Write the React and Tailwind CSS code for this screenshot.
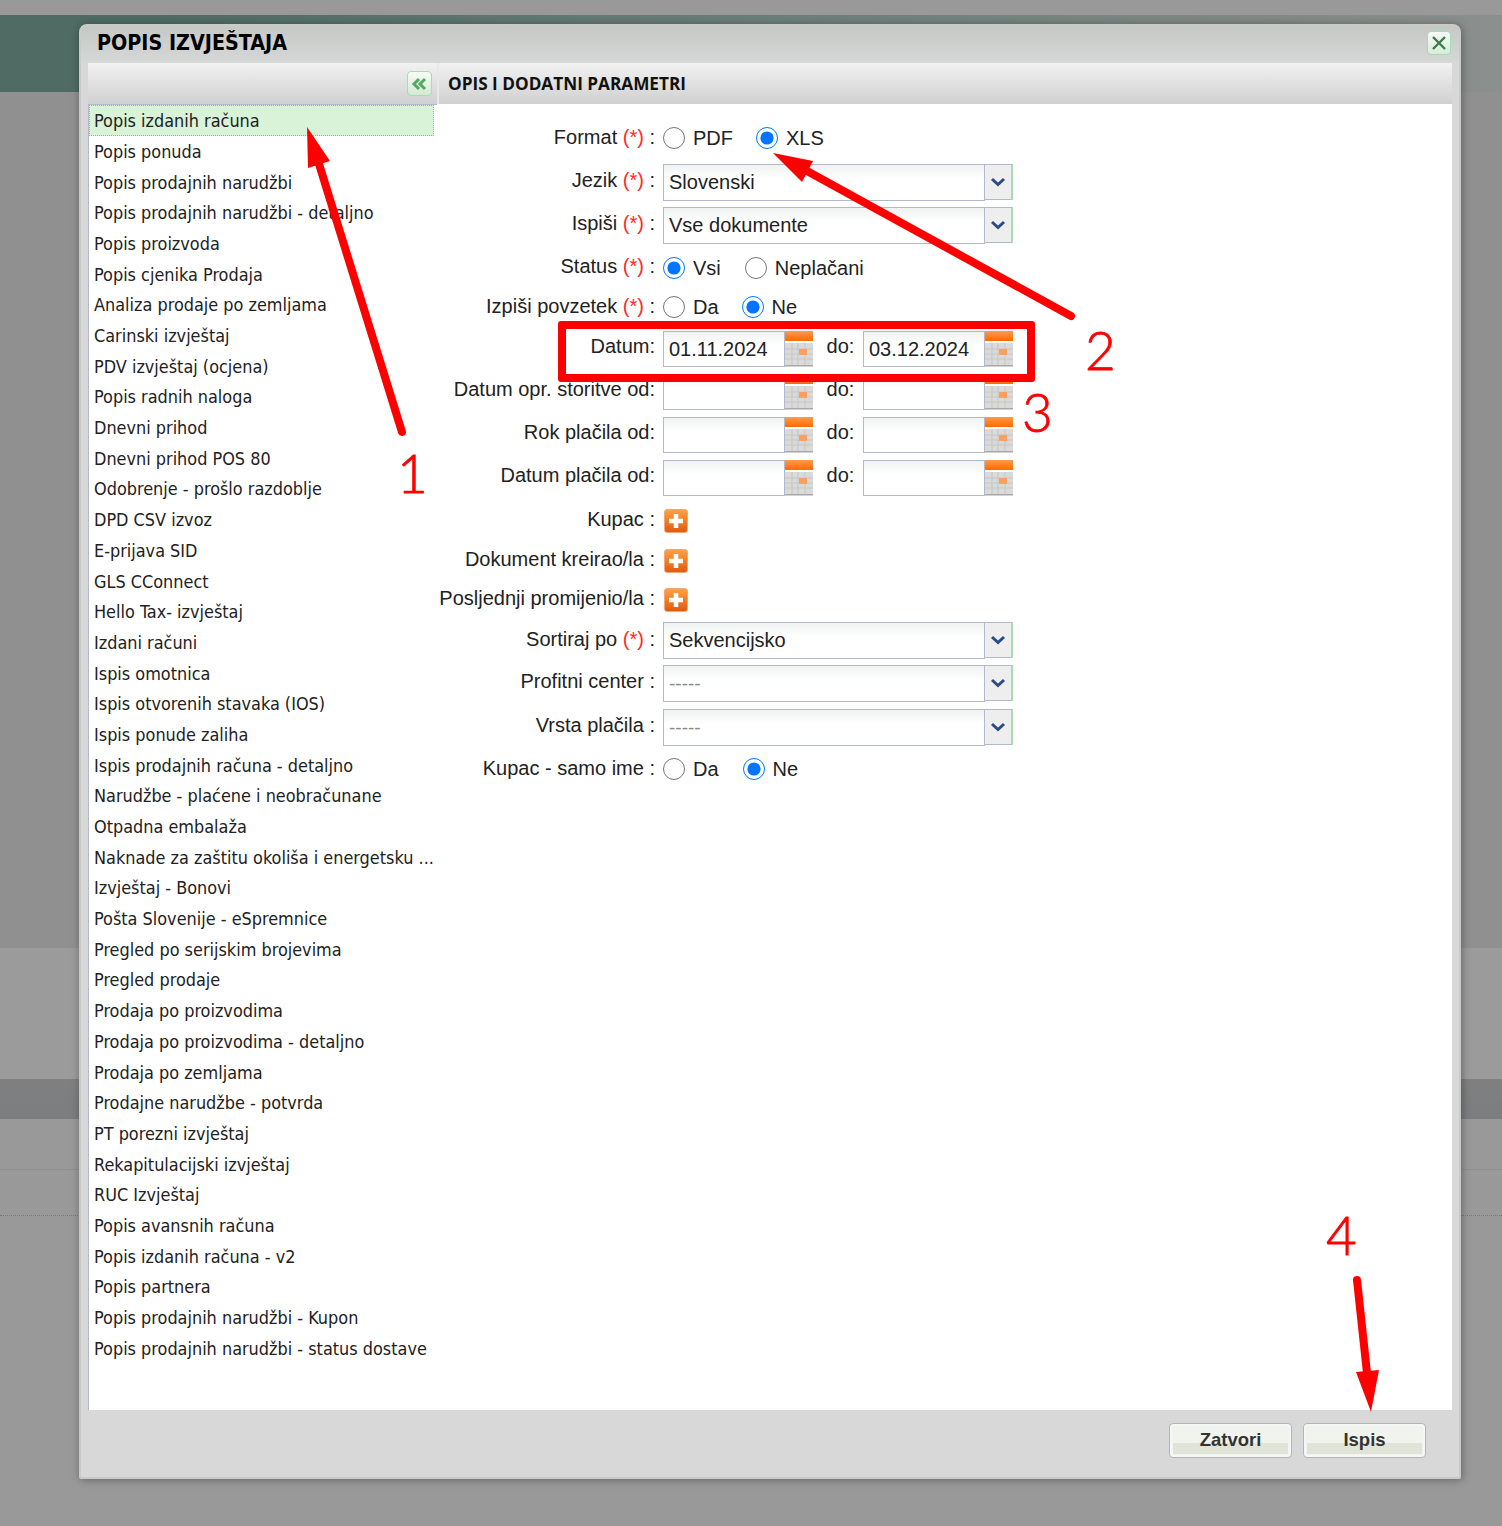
import React from "react";

const reports = [
  "Popis izdanih računa",
  "Popis ponuda",
  "Popis prodajnih narudžbi",
  "Popis prodajnih narudžbi - detaljno",
  "Popis proizvoda",
  "Popis cjenika Prodaja",
  "Analiza prodaje po zemljama",
  "Carinski izvještaj",
  "PDV izvještaj (ocjena)",
  "Popis radnih naloga",
  "Dnevni prihod",
  "Dnevni prihod POS 80",
  "Odobrenje - prošlo razdoblje",
  "DPD CSV izvoz",
  "E-prijava SID",
  "GLS CConnect",
  "Hello Tax- izvještaj",
  "Izdani računi",
  "Ispis omotnica",
  "Ispis otvorenih stavaka (IOS)",
  "Ispis ponude zaliha",
  "Ispis prodajnih računa - detaljno",
  "Narudžbe - plaćene i neobračunane",
  "Otpadna embalaža",
  "Naknade za zaštitu okoliša i energetsku ...",
  "Izvještaj - Bonovi",
  "Pošta Slovenije - eSpremnice",
  "Pregled po serijskim brojevima",
  "Pregled prodaje",
  "Prodaja po proizvodima",
  "Prodaja po proizvodima - detaljno",
  "Prodaja po zemljama",
  "Prodajne narudžbe - potvrda",
  "PT porezni izvještaj",
  "Rekapitulacijski izvještaj",
  "RUC Izvještaj",
  "Popis avansnih računa",
  "Popis izdanih računa - v2",
  "Popis partnera",
  "Popis prodajnih narudžbi - Kupon",
  "Popis prodajnih narudžbi - status dostave",
];

function Label({ text, required, colon = " :", className = "pb-[4px]" }) {
  return (
    <div className={"w-[226px] shrink-0 pr-[8px] text-right whitespace-nowrap " + className}>
      {text}
      {required && <span className="text-[#ff2a2a]"> (*)</span>}
      {colon}
    </div>
  );
}

function Radio({ label, checked, className }) {
  return (
    <label className={"flex items-center " + className}>
      <input type="radio" readOnly checked={!!checked} className="m-0 h-[22px] w-[22px]" />
      <span className="ml-[8px]">{label}</span>
    </label>
  );
}

function Select({ value, placeholder }) {
  return (
    <div className="flex h-[37px] w-[350px]">
      <div className="flex h-[37px] w-[322px] items-center border border-[#b4b8cd] bg-gradient-to-b from-[#f0f2f2] to-white to-40% pl-[5px]">
        {placeholder ? <span className="pt-[2px] text-[19px] text-[#8a8a8a]">-----</span> : value}
      </div>
      <div className="flex h-[36px] w-[28px] items-center justify-center border-t border-r-2 border-t-[#b4b8cd] border-r-[#a5dcb4] bg-[#eeeeee] shadow-[inset_0_-1px_0_#b4b8cd]">
        <svg width="16" height="10" viewBox="0 0 16 10">
          <path d="M2 2 L8 7.5 L14 2" fill="none" stroke="#2c4a85" strokeWidth="3" />
        </svg>
      </div>
    </div>
  );
}

function Calendar() {
  return (
    <svg width="28" height="36" viewBox="0 0 28 36" className="shrink-0">
      <defs>
        <linearGradient id="calTop" x1="0" y1="0" x2="0" y2="1">
          <stop offset="0" stopColor="#ff9a4d" />
          <stop offset="1" stopColor="#ff6a00" />
        </linearGradient>
      </defs>
      <rect x="0" y="0" width="28" height="10" fill="url(#calTop)" />
      <rect x="0" y="12" width="28" height="22" fill="#dadada" />
      <path
        d="M0 18h28M0 23h28M0 28h28M7 12v22M13 12v22M20 12v22"
        stroke="#c6c6c4"
        strokeWidth="1"
      />
      <rect x="14" y="18" width="8" height="6" fill="#ff9f5f" />
      <rect x="0" y="34" width="28" height="1.5" fill="#a8a8a8" />
    </svg>
  );
}

function DateInput({ value }) {
  return (
    <div className="flex">
      <div className="flex h-[36px] w-[122px] items-center border border-[#b4b8cd] bg-gradient-to-b from-[#f0f2f2] to-white to-40% pl-[5px]">
        {value}
      </div>
      <Calendar />
    </div>
  );
}

function DateRow({ label, from, to, className }) {
  return (
    <div className={"flex h-[36px] items-center " + className}>
      <Label text={label} colon=":" className="pb-[6px]" />
      <DateInput value={from} />
      <div className="w-[50px] pb-[7px] pl-[5px] text-center">do:</div>
      <DateInput value={to} />
    </div>
  );
}

function Plus() {
  return (
    <div className="ml-[1px] flex h-[24px] w-[24px] items-center justify-center rounded-[3px] border border-[#f0a878] bg-gradient-to-b from-[#ffa040] to-[#e25a0a]">
      <svg width="16" height="16" viewBox="0 0 16 16">
        <path d="M8 1v14M1 8h14" stroke="#ffffff" strokeWidth="4.5" />
      </svg>
    </div>
  );
}

function Row({ className, children }) {
  return <div className={"flex h-[36px] items-center " + className}>{children}</div>;
}

function Btn({ text }) {
  return (
    <button className="relative h-[35px] w-[123px] overflow-hidden rounded-[4px] border border-[#b5b5b5] bg-[#f1f3ee] pb-[2px] shadow-[inset_0_0_0_2px_#f6f6f6] font-['Liberation_Sans',sans-serif] text-[18.5px] font-bold text-[#333]">
      <div className="absolute inset-x-[3px] bottom-[3px] h-[11px] bg-[#dfe4d6]" />
      <span className="relative">{text}</span>
    </button>
  );
}

export default function App() {
  return (
    <div className="relative h-[1526px] w-[1502px] overflow-hidden bg-[#999999] font-['Liberation_Sans',sans-serif]">
      {/* zatamnjena pozadina */}
      <div className="h-[15px] bg-[#999999]" />
      <div className="h-[77px] bg-gradient-to-r from-[#4f6b63] from-10% via-[#6b7f7a] to-[#8b8f8d]" />
      <div className="h-[856px] bg-[#909090]" />
      <div className="h-[131px] bg-[#9b9b9b]" />
      <div className="h-[40px] bg-gradient-to-b from-[#808080] to-[#7b7d7e]" />
      <div className="h-[51px] border-b border-[#909090] bg-[#999999]" />
      <div className="h-[46px] border-b border-dotted border-[#777] bg-[#999999]" />

      {/* prozor */}
      <div className="absolute left-[79px] top-[24px] flex h-[1455px] w-[1382px] flex-col rounded-t-[8px] rounded-b-[2px] border-2 border-[#c9cbc9] bg-[#d8d8d8] shadow-[1px_1px_8px_rgba(0,0,0,0.35)]">
        <div className="flex h-[37px] shrink-0 items-center justify-between bg-gradient-to-b from-[#c6c8c6] to-[#d6d8d7] pb-[4px] pl-[16px] pr-[8px]">
          <div className="font-['DejaVu_Sans_Condensed','DejaVu_Sans',sans-serif] text-[21.3px] font-bold text-black">POPIS IZVJEŠTAJA</div>
          <div className="flex h-[24px] w-[24px] items-center justify-center rounded-[4px] border border-[#a5dcb0] bg-gradient-to-b from-[#f6fbf6] to-[#d8ecd8]">
            <svg width="18" height="18" viewBox="0 0 18 18">
              <path d="M3 3 L15 15 M15 3 L3 15" stroke="#3f7a4c" strokeWidth="2.4" />
            </svg>
          </div>
        </div>

        <div className="ml-[7px] mr-[7px] flex h-[1347px] shrink-0">
          <div className="flex w-[349px] shrink-0 flex-col">
            <div className="flex h-[41px] shrink-0 items-center justify-end bg-gradient-to-b from-[#f2f2f2] to-[#d0d0d0] pr-[5px]">
              <div className="flex h-[25px] w-[25px] items-center justify-center rounded-[4px] border border-[#a5dcb0] bg-gradient-to-b from-[#f6fbf6] to-[#d4ead4]">
                <svg width="17" height="14" viewBox="0 0 17 14">
                  <path d="M8 2 L3 7 L8 12 M14 2 L9 7 L14 12" fill="none" stroke="#55a85f" strokeWidth="3" />
                </svg>
              </div>
            </div>
            <div className="flex-1 border-l border-t border-[#b4b8cd] bg-white font-['DejaVu_Sans_Condensed','DejaVu_Sans',sans-serif] text-[17.9px] text-[#222]">
              {reports.map((r, i) => (
                <div
                  key={r}
                  className={
                    i === 0
                      ? "flex h-[31px] w-[345px] items-center whitespace-nowrap border border-dotted border-[#9ab09a] bg-[#d9f3d9] pl-[4px] pt-[2px]"
                      : "flex h-[30.7px] items-center whitespace-nowrap pl-[5px] pt-[2px]"
                  }
                >
                  {r}
                </div>
              ))}
            </div>
          </div>

          <div className="flex flex-1 flex-col">
            <div className="flex h-[41px] shrink-0 items-center border-l-2 border-[#e8e8e8] bg-gradient-to-b from-[#f2f2f2] to-[#d0d0d0] pl-[9px] font-['Open_Sans',sans-serif] text-[17.2px] font-bold text-[#111]">
              OPIS I DODATNI PARAMETRI
            </div>
            <div className="flex-1 bg-white pt-[16px] text-[20px] text-[#222]">
              <Row>
                <Label text="Format" required className="pb-[3px]" />
                <Radio label="PDF" />
                <Radio label="XLS" checked className="ml-[23px]" />
              </Row>
              <Row className="mt-[8px]">
                <Label text="Jezik" required />
                <Select value="Slovenski" />
              </Row>
              <Row className="mt-[7px]">
                <Label text="Ispiši" required />
                <Select value="Vse dokumente" />
              </Row>
              <Row className="mt-[7px]">
                <Label text="Status" required />
                <Radio label="Vsi" checked />
                <Radio label="Neplačani" className="ml-[24px]" />
              </Row>
              <Row className="mt-[3px]">
                <Label text="Izpiši povzetek" required className="pb-[3px]" />
                <Radio label="Da" />
                <Radio label="Ne" checked className="ml-[23px]" />
              </Row>
              <DateRow label="Datum" from="01.11.2024" to="03.12.2024" className="mt-[6px]" />
              <DateRow label="Datum opr. storitve od" className="mt-[7px]" />
              <DateRow label="Rok plačila od" className="mt-[7px]" />
              <DateRow label="Datum plačila od" className="mt-[7px]" />
              <Row className="mt-[7px]">
                <Label text="Kupac" />
                <Plus />
              </Row>
              <Row className="mt-[4px]">
                <Label text="Dokument kreirao/la" />
                <Plus />
              </Row>
              <Row className="mt-[3px]">
                <Label text="Posljednji promijenio/la" />
                <Plus />
              </Row>
              <Row className="mt-[4px]">
                <Label text="Sortiraj po" required className="pb-[3px]" />
                <Select value="Sekvencijsko" />
              </Row>
              <Row className="mt-[7px]">
                <Label text="Profitni center" />
                <Select placeholder />
              </Row>
              <Row className="mt-[8px]">
                <Label text="Vrsta plačila" />
                <Select placeholder />
              </Row>
              <Row className="mt-[6px]">
                <Label text="Kupac - samo ime" className="pb-[3px]" />
                <Radio label="Da" />
                <Radio label="Ne" checked className="ml-[24px]" />
              </Row>
            </div>
          </div>
        </div>

        <div className="flex flex-1 items-start justify-end gap-[11px] pr-[33px] pt-[13px]">
          <Btn text="Zatvori" />
          <Btn text="Ispis" />
        </div>
      </div>

      {/* oznake preko slike */}
      <div className="absolute left-[558px] top-[321px] h-[61px] w-[477px] rounded-[3px] border-8 border-[#ff0000]" />
      <svg width="1502" height="1526" viewBox="0 0 1502 1526" className="absolute left-0 top-0">
        <g fill="#ff0000" stroke="none">
          <path d="M307 127 L308 168 L330 161 Z" />
          <path d="M773 153 L813 161 L802 182 Z" />
          <path d="M1371 1412 L1356 1372 L1379 1370 Z" />
        </g>
        <g stroke="#ff0000" strokeWidth="8" strokeLinecap="round" fill="none">
          <path d="M402 432 L319 164" />
          <path d="M1071 316 L807 171" />
          <path d="M1357 1280 L1367 1373" />
        </g>
      </svg>
      <div className="absolute left-[397px] top-[437px] font-['Lato',sans-serif] text-[53px] font-light leading-[72px] text-[#ff0000] [-webkit-text-stroke:0.8px_#ff0000]">1</div>
      <div className="absolute left-[1085px] top-[314px] font-['Lato',sans-serif] text-[53px] font-light leading-[72px] text-[#ff0000] [-webkit-text-stroke:0.8px_#ff0000]">2</div>
      <div className="absolute left-[1022px] top-[376px] font-['Lato',sans-serif] text-[53px] font-light leading-[72px] text-[#ff0000] [-webkit-text-stroke:0.8px_#ff0000]">3</div>
      <div className="absolute left-[1326px] top-[1199px] font-['Lato',sans-serif] text-[53px] font-light leading-[72px] text-[#ff0000] [-webkit-text-stroke:0.8px_#ff0000]">4</div>
    </div>
  );
}
